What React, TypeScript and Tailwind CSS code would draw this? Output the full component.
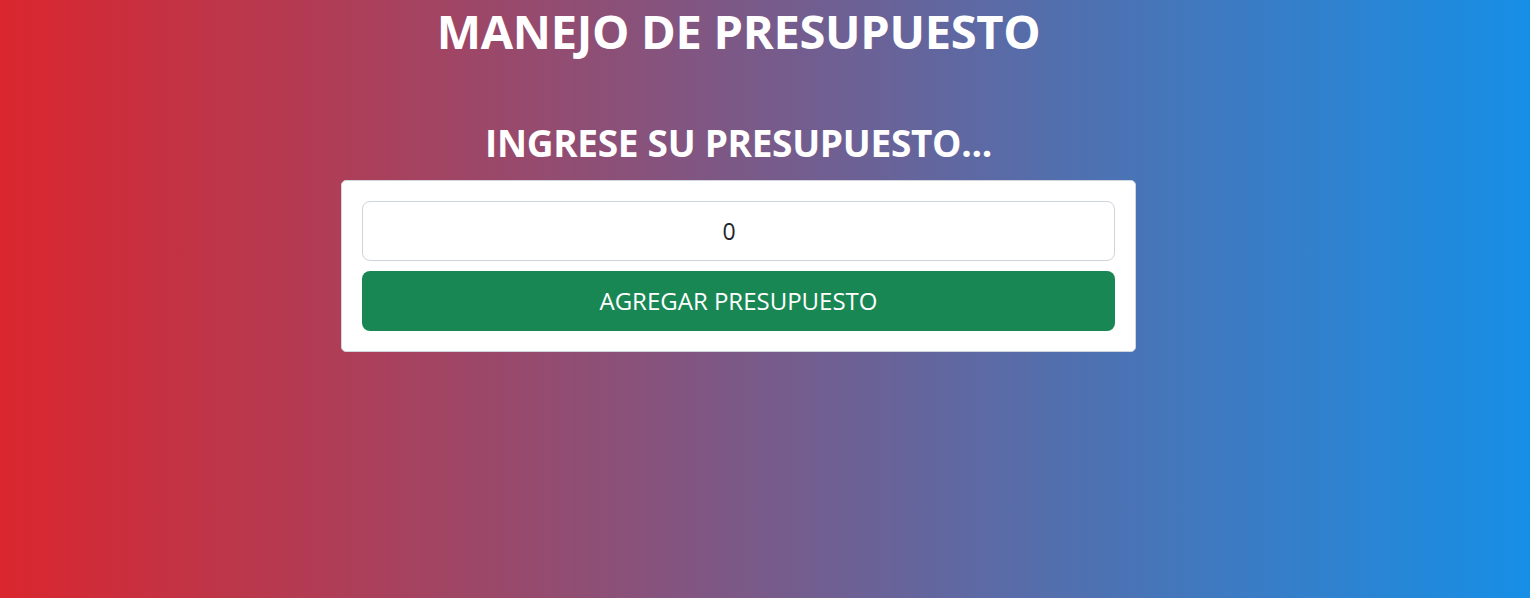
import React, { useState } from 'react';

export default function App() {
  const [budget, setBudget] = useState('0');

  return (
    <div className="min-h-[598px] w-full bg-[linear-gradient(to_right,#da262e,#168fe6)] font-['Open_Sans',sans-serif]">
      <div className="flex flex-col items-center pr-[53px]">
        <h1 className="mt-[1px] text-[47px] font-bold leading-[60px] tracking-[-0.3px] text-white">
          MANEJO DE PRESUPUESTO
        </h1>
        <h2 className="mt-[57px] text-[37px] font-bold leading-[50px] tracking-[-0.3px] text-white">
          INGRESE SU PRESUPUESTO...
        </h2>
        <div className="mt-[12px] w-[795px] rounded-[5px] border border-gray-300 bg-white p-5">
          <input
            type="number"
            value={budget}
            onChange={(e) => setBudget(e.target.value)}
            className="h-[60px] w-full rounded-lg border border-[#ced4da] bg-white pr-[4px] text-center text-[23px] text-[#212529] outline-none"
          />
          <button className="mt-[10px] h-[60px] w-full rounded-lg bg-[#198754] text-[24px] text-white">
            AGREGAR PRESUPUESTO
          </button>
        </div>
      </div>
    </div>
  );
}
